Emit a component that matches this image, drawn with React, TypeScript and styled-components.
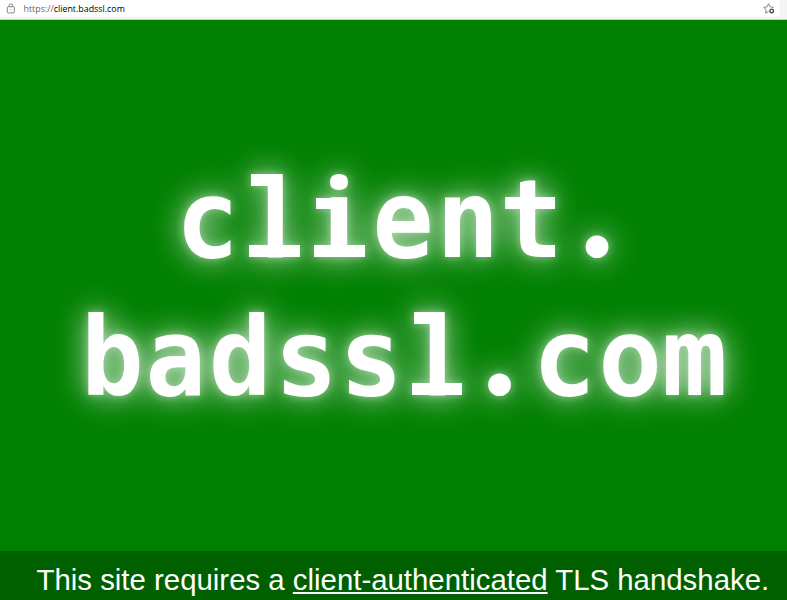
import React from 'react';
import styled, { createGlobalStyle, css } from 'styled-components';

const GlobalStyle = createGlobalStyle`
  html, body { margin: 0; padding: 0; overflow: hidden; }
`;
const Page = styled.div`
  width: 787px;
  height: 600px;
  display: flex;
  flex-direction: column;
  overflow: hidden;
  background: #008000;
`;
const Toolbar = styled.header`
  box-sizing: border-box;
  height: 20px;
  flex: none;
  padding-right: 7px;
  background: #f5f5f5;
  border-bottom: 1px solid #b9d6b9;
`;
const AddressField = styled.div`
  box-sizing: border-box;
  height: 17px;
  padding: 0 5px 0 6px;
  display: flex;
  align-items: center;
  background: #fff;
  border-radius: 0 0 3px 0;
  box-shadow: 0 0 1px #c8c8c8;
`;
const Url = styled.span`
  flex: 1;
  margin-left: 7.5px;
  font: 8.87px/17px "Open Sans", sans-serif;
  color: #666;
  white-space: nowrap;
  padding-top: 1px;
`;
const Host = styled.span`
  color: #000;
`;
const Main = styled.main`
  flex: 1;
  width: 810px;
  padding-top: 130px;
  box-sizing: border-box;
`;
const Title = styled.h1`
  margin: 0;
  font: bold 108px/138px "DejaVu Sans Mono", monospace;
  color: #fff;
  filter: drop-shadow(0 0 5px rgba(255, 255, 255, 0.45)) drop-shadow(0 0 16px rgba(255, 255, 255, 0.75));
`;
const Line = styled.div`
  height: 138px;
  display: flex;
  justify-content: center;
`;

const serif = css`
  content: '';
  position: absolute;
  background: #fff;
`;
const Cell = styled.span<{ $ch: string }>`
  position: relative;
  width: 65px;
  height: 138px;
  flex: none;
  text-align: center;
  ${(p) => (p.$ch === 'l' || p.$ch === 'i') && css`
    &::before {
      ${serif}
      left: 8.5px;
      top: ${p.$ch === 'l' ? 24 : 47.5}px;
      width: 24px;
      height: ${p.$ch === 'l' ? 12 : 11.5}px;
    }
    &::after {
      ${serif}
      left: 6.5px;
      top: 95px;
      width: 50.5px;
      height: 12px;
    }
  `}
  ${(p) => p.$ch === 't' && css`
    clip-path: polygon(0 33px, 15px 33px, 34px 28px, 65px 28px, 65px 138px, 0 138px);
  `}
`;
const Glyph = styled.span<{ $font?: string; $size?: number; $shift: number; $sx?: number }>`
  display: inline-block;
  line-height: 0;
  transform: translate(${(p) => p.$shift}px, 0.5px) scaleX(${(p) => p.$sx ?? 1});
  ${(p) => p.$font && css`font-family: ${p.$font}, sans-serif;`}
  ${(p) => p.$size && css`font-size: ${p.$size}px;`}
`;
const Footer = styled.footer`
  box-sizing: border-box;
  height: 49px;
  flex: none;
  padding: 5px 0 0 36.5px;
  background: #006000;
  color: #fff;
  font: 29.38px/48px "Liberation Sans", Arial, sans-serif;
  white-space: nowrap;
`;
const Link = styled.a`
  color: #fff;
  text-decoration: underline;
  text-decoration-thickness: 2px;
  text-underline-offset: 2px;
`;

type GlyphSpec = { shift: number; sx?: number; font?: string; size?: number };
const glyphs: Record<string, GlyphSpec> = {
  a: { shift: -1.8, sx: 0.93 },
  b: { shift: -0.2, sx: 0.97 },
  c: { shift: -3.2, sx: 0.98 },
  d: { shift: -2.2, sx: 0.97 },
  e: { shift: -2.4, sx: 0.94 },
  i: { shift: -1, font: '"Open Sans"', size: 109.5, sx: 1 },
  l: { shift: 0.4, font: '"Liberation Sans"', size: 115.5, sx: 0.94 },
  m: { shift: -3, sx: 1.01 },
  n: { shift: -2.8, sx: 0.97 },
  o: { shift: -2.4, sx: 0.98 },
  s: { shift: -1.5, sx: 0.98 },
  t: { shift: -4.2, sx: 0.98 },
  '.': { shift: -3, font: 'Lato', size: 150 },
};

const Word = ({ text }: { text: string }) => (
  <Line>
    {text.split('').map((ch, n) => {
      const g = glyphs[ch];
      return (
        <Cell key={n} $ch={ch}>
          <Glyph $font={g.font} $size={g.size} $shift={g.shift} $sx={g.sx}>{ch}</Glyph>
        </Cell>
      );
    })}
  </Line>
);

const LockIcon = () => (
  <svg width="10" height="12" viewBox="0 0 10 12" fill="none" stroke="#777" strokeWidth="0.9">
    <rect x="1.3" y="3.7" width="7" height="6.2" rx="1" />
    <path d="M3.1 3.7V2.5a1.7 1.7 0 0 1 3.4 0v1.2" />
    <circle cx="4.8" cy="6.8" r="0.5" fill="#777" stroke="none" />
  </svg>
);
const StarIcon = () => (
  <svg width="12" height="12" viewBox="0 0 12 12" fill="none" stroke="#777" strokeWidth="0.9">
    <path d="M5.5 8.7 2.6 10.1l.5-3.3L.8 4.3l3.3-.5L5.5.7 7 3.8l3.3.4-1 1" strokeLinejoin="round" />
    <circle cx="8.7" cy="7.9" r="1.8" stroke="#555" strokeWidth="1.4" />
  </svg>
);

export default function App() {
  return (
    <Page>
      <GlobalStyle />
      <Toolbar>
        <AddressField>
          <LockIcon />
          <Url>https://<Host>client.badssl.com</Host></Url>
          <StarIcon />
        </AddressField>
      </Toolbar>
      <Main>
        <Title>
          <Word text="client." />
          <Word text="badssl.com" />
        </Title>
      </Main>
      <Footer>
        This site requires a <Link>client-authenticated</Link> TLS handshake.
      </Footer>
    </Page>
  );
}
